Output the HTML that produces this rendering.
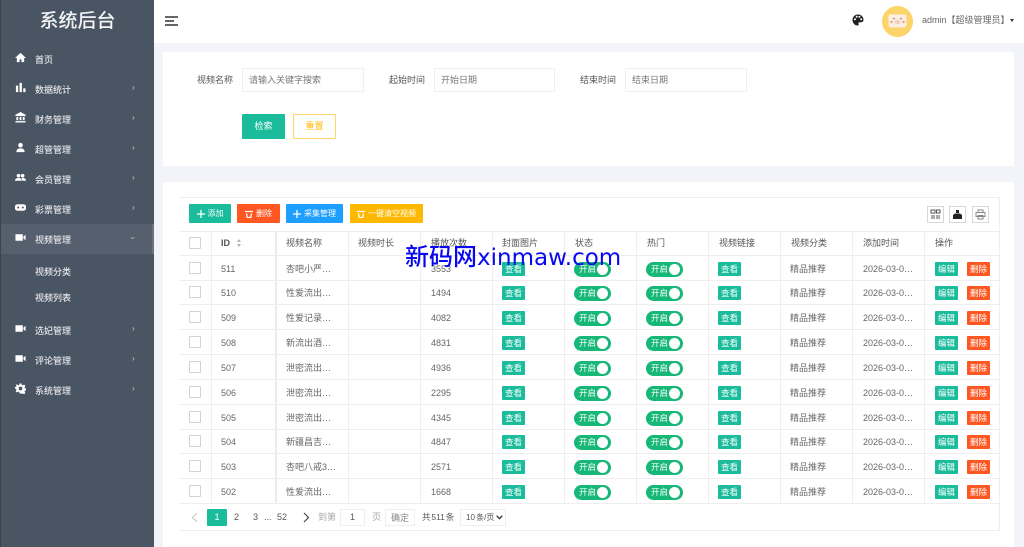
<!DOCTYPE html>
<html lang="zh"><head><meta charset="utf-8"><title>系统后台</title>
<style>
*{box-sizing:border-box;margin:0;padding:0}
html{background:#f3f4f9}
html,body{width:1024px;height:547px;overflow:hidden}
body{position:relative;background:#f3f4f9;font:9px/12px "Liberation Sans","Noto Sans CJK SC",sans-serif;color:#666;filter:blur(.35px)}
.a,.a>*{position:absolute;white-space:nowrap}
#side{left:0;top:0;width:154px;height:547px;background:#4a5564;border-left:1px solid #3b4350}
#side .t{left:0;width:153px;top:9px;text-align:center;font-size:19px;line-height:26px;color:#f2f3f4;font-weight:500}
#side .m{left:34px;color:#e4e6e9;font-size:9px;font-weight:500;line-height:12px}
#side .ar{left:131px;color:#c8ccd1;font-size:8px;line-height:10px}
#side svg{left:14px;width:11px;height:11px;fill:#fff}
#act{left:0;top:224px;width:153px;height:30px;background:#565f6e}
#actb{left:151px;top:224px;width:2px;height:30px;background:#6a7280}
#head{left:154px;top:0;width:870px;height:43px;background:#fff}
.card{background:#fff}
.lb{color:#555;line-height:12px}
.in{height:24px;border:1px solid #eee;background:#fff;color:#777;padding:5px 6px;line-height:12px;border-radius:1px}
.bt{color:#fff;text-align:center;border-radius:1px;white-space:nowrap}
.tb{display:flex;justify-content:center;align-items:center;gap:3px;height:19px;top:204px;font-size:8px}
.tb svg{width:8px;height:8px;fill:none;stroke:#fff;stroke-width:1.300}
.line{background:#eeeeee}
.r{left:179px;width:820px;height:25px;border-bottom:1px solid #eee}
.r>*{position:absolute}
.c{top:7px;line-height:13px;white-space:nowrap}
.cb{left:10px;top:6px;width:12px;height:12px;border:1px solid #d2d2d2;border-radius:1px;background:#fff}
.g{top:6px;width:23px;height:14px;line-height:14px;background:#1abc9c;color:#fff;text-align:center;border-radius:1px;font-size:8.5px}
.o{left:788px;background:#ff5722}
.sw{top:6px;width:37px;height:15px;border-radius:8px;background:#16b777;color:#fff;font-size:8.5px;line-height:15px;padding-left:5px}
.sw i{position:absolute;right:3px;top:2px;width:11px;height:11px;border-radius:50%;background:#fff}
.h{top:237px;color:#555;line-height:13px;white-space:nowrap}
.ic{top:206px;width:17px;height:17px;border:1px solid #d8d8d8;background:#fff}
.ic svg{position:absolute;left:2px;top:2px;width:11px;height:11px}
.p{top:511px;line-height:13px;white-space:nowrap;color:#555}
#wm{position:absolute;left:405px;top:240px;font:23px/30px "DejaVu Sans","Noto Sans CJK SC",sans-serif;color:#0808f0;white-space:nowrap}
#wm span{font:500 24px/30px "Noto Sans CJK SC",sans-serif}
</style></head><body>
<div id="side" class="a">
<div class="t">系统后台</div>
<div id="act"></div><div id="actb"></div>
<svg style="top:52px" viewBox="0 0 12 12"><path d="M6 1 0 6.500h2V11h3V8h2v3h3V6.500h2z"/></svg><div class="m" style="top:54px">首页</div>
<svg style="top:82px" viewBox="0 0 12 12"><path d="M1 4h2.500v7H1zM5 1h2.500v10H5zM9 7h2.500v4H9z"/></svg><div class="m" style="top:84px">数据统计</div><div class="ar" style="top:83px">›</div>
<svg style="top:112px" viewBox="0 0 12 12"><path d="M6 0 .5 3v1.500h11V3zM1.500 5.500h2V9h-2zM5 5.500h2V9H5zM8.500 5.500h2V9h-2zM.5 10h11v1.500H.5z"/></svg><div class="m" style="top:114px">财务管理</div><div class="ar" style="top:113px">›</div>
<svg style="top:142px" viewBox="0 0 12 12"><circle cx="6" cy="3.500" r="2.500"/><path d="M1.500 11c0-3 2-4 4.500-4s4.500 1 4.500 4z"/></svg><div class="m" style="top:144px">超管管理</div><div class="ar" style="top:143px">›</div>
<svg style="top:172px" viewBox="0 0 12 12"><circle cx="3.800" cy="4" r="2"/><circle cx="8.300" cy="4" r="2"/><path d="M0 9.500c0-2 1.500-3 3.800-3s3.700 1 3.700 3zM8 9.500c0-1.200-.4-2.200-1-3 2.800-.6 5 .6 5 3z"/></svg><div class="m" style="top:174px">会员管理</div><div class="ar" style="top:173px">›</div>
<svg style="top:202px" viewBox="0 0 12 12"><path d="M3 2.500h6a3.300 3.300 0 0 1 0 7H3a3.300 3.300 0 0 1 0-7z"/><circle cx="3.500" cy="6" r="1.100" fill="#4a5564"/><circle cx="8.500" cy="6" r="1.100" fill="#4a5564"/></svg><div class="m" style="top:204px">彩票管理</div><div class="ar" style="top:203px">›</div>
<svg style="top:232px" viewBox="0 0 12 12"><path d="M.5 2.500h8v7h-8zM9.200 5 11.500 3v6L9.200 7z"/></svg><div class="m" style="top:234px">视频管理</div><div class="ar" style="top:233px;left:130px;transform:rotate(90deg)">›</div>
<div class="m" style="top:266px">视频分类</div>
<div class="m" style="top:292px">视频列表</div>
<svg style="top:323px" viewBox="0 0 12 12"><path d="M.5 2.500h8v7h-8zM9.200 5 11.500 3v6L9.200 7z"/></svg><div class="m" style="top:325px">选妃管理</div><div class="ar" style="top:324px">›</div>
<svg style="top:353px" viewBox="0 0 12 12"><path d="M.5 2.500h8v7h-8zM9.200 5 11.500 3v6L9.200 7z"/></svg><div class="m" style="top:355px">评论管理</div><div class="ar" style="top:354px">›</div>
<svg style="top:383px" viewBox="0 0 12 12"><path fill-rule="evenodd" d="M5 .5h2l.3 1.600 1.200.5L9.900 1.700l1.400 1.400-.9 1.400.5 1.200 1.600.3v2l-1.600.3-.5 1.200.9 1.400-1.400 1.400-1.400-.9-1.200.5L7 11.500H5l-.3-1.600-1.200-.5-1.400.9L.7 8.900l.9-1.400-.5-1.200L-.5 6V4.500l1.600-.3.5-1.200-.9-1.300L2.100 1.700l1.400.9 1.200-.5zM6 4a2 2 0 1 0 0 4 2 2 0 0 0 0-4z"/></svg><div class="m" style="top:385px">系统管理</div><div class="ar" style="top:384px">›</div>
</div>

<div id="head" class="a">
<div style="left:11px;top:16px;width:13px;height:1.500px;background:#666"></div>
<div style="left:11px;top:20px;width:9px;height:1.500px;background:#666"></div>
<div style="left:11px;top:24px;width:13px;height:1.500px;background:#666"></div>
<svg style="left:698px;top:14px;width:12px;height:12px" viewBox="0 0 12 12"><path fill="#222" fill-rule="evenodd" d="M6 .5C2.800.5.500 2.900.500 6s2.400 5.500 5 5.500c1.200 0 1.500-.8 1.100-1.500-.5-.9 0-1.700 1-1.700h1.300c1.500 0 2.600-1 2.600-2.600C11.500 2.700 9 .5 6 .5zM3 6.200a1 1 0 1 1 0-2 1 1 0 0 1 0 2zM4.700 3.800a1 1 0 1 1 0-2 1 1 0 0 1 0 2zM7.400 3.800a1 1 0 1 1 0-2 1 1 0 0 1 0 2zM9.200 6.200a1 1 0 1 1 0-2 1 1 0 0 1 0 2z"/></svg>
<div style="left:728px;top:6px;width:31px;height:31px;border-radius:50%;background:#fdd469"></div>
<svg style="left:734px;top:13px;width:19px;height:16px" viewBox="0 0 19 16"><path d="M2.500 1.500h14q2 0 2 2v8q0 3-3 3h-12q-3 0-3-3v-8q0-2 2-2z" fill="#fbeee3"/><ellipse cx="9.500" cy="9" rx="3" ry="2.200" fill="#f3cfc3"/><circle cx="3.500" cy="9" r="1.200" fill="#f29a80"/><circle cx="15.500" cy="9" r="1.200" fill="#f29a80"/><circle cx="6" cy="5.500" r=".8" fill="#8a6a5a"/><circle cx="13" cy="5.500" r=".8" fill="#8a6a5a"/></svg>
<div style="left:768px;top:14px;line-height:13px;color:#666;white-space:nowrap">admin【超级管理员】</div>
<div style="left:856px;top:19px;border:2.500px solid transparent;border-top:3px solid #333"></div>
</div>

<div class="a card" style="left:163px;top:52px;width:851px;height:114px"></div>
<div class="a">
<div class="lb" style="left:197px;top:74px">视频名称</div>
<div class="in" style="left:242px;top:68px;width:122px">请输入关键字搜索</div>
<div class="lb" style="left:389px;top:74px">起始时间</div>
<div class="in" style="left:434px;top:68px;width:121px">开始日期</div>
<div class="lb" style="left:580px;top:74px">结束时间</div>
<div class="in" style="left:625px;top:68px;width:122px">结束日期</div>
<div class="bt" style="left:242px;top:114px;width:43px;height:25px;line-height:25px;background:#1abc9c">检索</div>
<div class="bt" style="left:293px;top:114px;width:43px;height:25px;line-height:23px;background:#fff;border:1px solid #ffd46b;color:#ffb800">重置</div>
</div>

<div class="a card" style="left:163px;top:182px;width:851px;height:365px"></div>
<div class="a" style="left:179px;top:197px;width:821px;height:334px;border:1px solid #eee;border-left:0;background:#fff"></div>
<div class="a">
<div class="bt tb" style="left:189px;width:42px;background:#1abc9c"><svg viewBox="0 0 8 8"><path d="M4 0v8M0 4h8"/></svg>添加</div>
<div class="bt tb" style="left:237px;width:43px;background:#ff5722"><svg viewBox="0 0 8 8"><path d="M0 1.500h8M1.500 3.500 2.200 7.500h3.600l.7-4"/></svg>删除</div>
<div class="bt tb" style="left:286px;width:57px;background:#1e9fff"><svg viewBox="0 0 8 8"><path d="M4 0v8M0 4h8"/></svg>采集管理</div>
<div class="bt tb" style="left:350px;width:73px;background:#ffb800"><svg viewBox="0 0 8 8"><path d="M0 1.500h8M1.500 3.500 2.200 7.500h3.600l.7-4"/></svg>一键清空视频</div>
<div class="ic" style="left:927px"><svg viewBox="0 0 11 11" fill="none" stroke="#555"><path d="M1 1h4v3H1zM6.500 1h3.500v3H6.500zM2 6v4M4 6v4M7 6v4M9 6v4"/></svg></div>
<div class="ic" style="left:949px"><svg viewBox="0 0 11 11"><path fill="#222" d="M4 1h3v3H4zM1 6l2-1.500h5L10 6v4H1z"/></svg></div>
<div class="ic" style="left:972px"><svg viewBox="0 0 11 11" fill="none" stroke="#888"><path d="M3 3V1h5v2M1 3.500h9v4H1zM3 6.500h5V10H3z"/></svg></div>
</div>

<div class="a" style="left:0;top:0">
<div class="line" style="left:179px;top:231px;width:820px;height:1px"></div>
<div class="line" style="left:179px;top:255px;width:820px;height:1px"></div>
<div class="line" style="left:211px;top:231px;width:1px;height:273px"></div>
<div style="left:275px;top:231px;width:2px;height:273px;background:#ececec"></div>
<div class="line" style="left:348px;top:231px;width:1px;height:273px"></div>
<div class="line" style="left:420px;top:231px;width:1px;height:273px"></div>
<div class="line" style="left:492px;top:231px;width:1px;height:273px"></div>
<div class="line" style="left:564px;top:231px;width:1px;height:273px"></div>
<div class="line" style="left:636px;top:231px;width:1px;height:273px"></div>
<div class="line" style="left:708px;top:231px;width:1px;height:273px"></div>
<div class="line" style="left:780px;top:231px;width:1px;height:273px"></div>
<div class="line" style="left:852px;top:231px;width:1px;height:273px"></div>
<div class="line" style="left:924px;top:231px;width:1px;height:273px"></div>
<div style="left:189px;top:237px;width:12px;height:12px;border:1px solid #d2d2d2;border-radius:1px"></div>
<div class="h" style="left:221px"><b>ID</b></div>
<div style="left:237px;top:239px;border:2.500px solid transparent;border-bottom:3px solid #b2b2b2;border-top:0"></div>
<div style="left:237px;top:244px;border:2.500px solid transparent;border-top:3px solid #b2b2b2;border-bottom:0"></div>
<div class="h" style="left:286px">视频名称</div><div class="h" style="left:358px">视频时长</div><div class="h" style="left:431px">播放次数</div><div class="h" style="left:502px">封面图片</div><div class="h" style="left:575px">状态</div><div class="h" style="left:647px">热门</div><div class="h" style="left:719px">视频链接</div><div class="h" style="left:791px">视频分类</div><div class="h" style="left:863px">添加时间</div><div class="h" style="left:935px">操作</div>
</div>

<div class="a r" style="top:255.500px"><div class="cb"></div><div class="c" style="left:42px">511</div><div class="c" style="left:107px">杏吧小严…</div><div class="c" style="left:252px">3553</div><div class="g" style="left:323px">查看</div><div class="sw" style="left:395px">开启<i></i></div><div class="sw" style="left:467px">开启<i></i></div><div class="g" style="left:539px">查看</div><div class="c" style="left:611px">精品推荐</div><div class="c" style="left:684px">2026-03-0…</div><div class="g" style="left:756px">编辑</div><div class="g o">删除</div></div>
<div class="a r" style="top:280.300px"><div class="cb"></div><div class="c" style="left:42px">510</div><div class="c" style="left:107px">性爱流出…</div><div class="c" style="left:252px">1494</div><div class="g" style="left:323px">查看</div><div class="sw" style="left:395px">开启<i></i></div><div class="sw" style="left:467px">开启<i></i></div><div class="g" style="left:539px">查看</div><div class="c" style="left:611px">精品推荐</div><div class="c" style="left:684px">2026-03-0…</div><div class="g" style="left:756px">编辑</div><div class="g o">删除</div></div>
<div class="a r" style="top:305.200px"><div class="cb"></div><div class="c" style="left:42px">509</div><div class="c" style="left:107px">性爱记录…</div><div class="c" style="left:252px">4082</div><div class="g" style="left:323px">查看</div><div class="sw" style="left:395px">开启<i></i></div><div class="sw" style="left:467px">开启<i></i></div><div class="g" style="left:539px">查看</div><div class="c" style="left:611px">精品推荐</div><div class="c" style="left:684px">2026-03-0…</div><div class="g" style="left:756px">编辑</div><div class="g o">删除</div></div>
<div class="a r" style="top:330px"><div class="cb"></div><div class="c" style="left:42px">508</div><div class="c" style="left:107px">新流出酒…</div><div class="c" style="left:252px">4831</div><div class="g" style="left:323px">查看</div><div class="sw" style="left:395px">开启<i></i></div><div class="sw" style="left:467px">开启<i></i></div><div class="g" style="left:539px">查看</div><div class="c" style="left:611px">精品推荐</div><div class="c" style="left:684px">2026-03-0…</div><div class="g" style="left:756px">编辑</div><div class="g o">删除</div></div>
<div class="a r" style="top:354.900px"><div class="cb"></div><div class="c" style="left:42px">507</div><div class="c" style="left:107px">泄密流出…</div><div class="c" style="left:252px">4936</div><div class="g" style="left:323px">查看</div><div class="sw" style="left:395px">开启<i></i></div><div class="sw" style="left:467px">开启<i></i></div><div class="g" style="left:539px">查看</div><div class="c" style="left:611px">精品推荐</div><div class="c" style="left:684px">2026-03-0…</div><div class="g" style="left:756px">编辑</div><div class="g o">删除</div></div>
<div class="a r" style="top:379.700px"><div class="cb"></div><div class="c" style="left:42px">506</div><div class="c" style="left:107px">泄密流出…</div><div class="c" style="left:252px">2295</div><div class="g" style="left:323px">查看</div><div class="sw" style="left:395px">开启<i></i></div><div class="sw" style="left:467px">开启<i></i></div><div class="g" style="left:539px">查看</div><div class="c" style="left:611px">精品推荐</div><div class="c" style="left:684px">2026-03-0…</div><div class="g" style="left:756px">编辑</div><div class="g o">删除</div></div>
<div class="a r" style="top:404.600px"><div class="cb"></div><div class="c" style="left:42px">505</div><div class="c" style="left:107px">泄密流出…</div><div class="c" style="left:252px">4345</div><div class="g" style="left:323px">查看</div><div class="sw" style="left:395px">开启<i></i></div><div class="sw" style="left:467px">开启<i></i></div><div class="g" style="left:539px">查看</div><div class="c" style="left:611px">精品推荐</div><div class="c" style="left:684px">2026-03-0…</div><div class="g" style="left:756px">编辑</div><div class="g o">删除</div></div>
<div class="a r" style="top:429.400px"><div class="cb"></div><div class="c" style="left:42px">504</div><div class="c" style="left:107px">新疆昌吉…</div><div class="c" style="left:252px">4847</div><div class="g" style="left:323px">查看</div><div class="sw" style="left:395px">开启<i></i></div><div class="sw" style="left:467px">开启<i></i></div><div class="g" style="left:539px">查看</div><div class="c" style="left:611px">精品推荐</div><div class="c" style="left:684px">2026-03-0…</div><div class="g" style="left:756px">编辑</div><div class="g o">删除</div></div>
<div class="a r" style="top:454.300px"><div class="cb"></div><div class="c" style="left:42px">503</div><div class="c" style="left:107px">杏吧八戒3…</div><div class="c" style="left:252px">2571</div><div class="g" style="left:323px">查看</div><div class="sw" style="left:395px">开启<i></i></div><div class="sw" style="left:467px">开启<i></i></div><div class="g" style="left:539px">查看</div><div class="c" style="left:611px">精品推荐</div><div class="c" style="left:684px">2026-03-0…</div><div class="g" style="left:756px">编辑</div><div class="g o">删除</div></div>
<div class="a r" style="top:479.100px"><div class="cb"></div><div class="c" style="left:42px">502</div><div class="c" style="left:107px">性爱流出…</div><div class="c" style="left:252px">1668</div><div class="g" style="left:323px">查看</div><div class="sw" style="left:395px">开启<i></i></div><div class="sw" style="left:467px">开启<i></i></div><div class="g" style="left:539px">查看</div><div class="c" style="left:611px">精品推荐</div><div class="c" style="left:684px">2026-03-0…</div><div class="g" style="left:756px">编辑</div><div class="g o">删除</div></div>

<div class="a" style="left:0;top:0">
<svg style="left:190px;top:512px;width:10px;height:11px" viewBox="0 0 10 11" fill="none" stroke="#ccc" stroke-width="1.200"><path d="M7 1 2.500 5.500 7 10"/></svg>
<div style="left:207px;top:509px;width:20px;height:17px;background:#1abc9c;color:#fff;text-align:center;line-height:17px;border-radius:1px">1</div>
<div class="p" style="left:234px">2</div><div class="p" style="left:253px">3</div><div class="p" style="left:264px">...</div><div class="p" style="left:277px">52</div>
<svg style="left:301px;top:512px;width:10px;height:11px" viewBox="0 0 10 11" fill="none" stroke="#444" stroke-width="1.200"><path d="M3 1 7.500 5.500 3 10"/></svg>
<div class="p" style="left:318px;color:#aaa">到第</div>
<div style="left:340px;top:509px;width:25px;height:17px;border:1px solid #eee;text-align:center;line-height:15px;color:#555">1</div>
<div class="p" style="left:372px;color:#aaa">页</div>
<div style="left:385px;top:509px;width:30px;height:17px;border:1px solid #eee;text-align:center;line-height:16px;color:#888">确定</div>
<div class="p" style="left:422px;font-size:8.5px;word-spacing:-1.500px">共 511 条</div>
<div style="left:460px;top:509px;width:46px;height:17px;border:1px solid #eee;line-height:15px;padding-left:5px;color:#555;white-space:nowrap;font-size:8px;word-spacing:-1px">10 条/页</div>
<svg style="left:496px;top:515px;width:7px;height:5px" viewBox="0 0 7 5" fill="none" stroke="#333" stroke-width="1.300"><path d="M.7.7 3.500 3.700 6.300.7"/></svg>
<div class="line" style="left:179px;top:530px;width:820px;height:1px"></div>
</div>

<div id="wm"><span>新码网</span>xinmaw.com</div>
</body></html>
